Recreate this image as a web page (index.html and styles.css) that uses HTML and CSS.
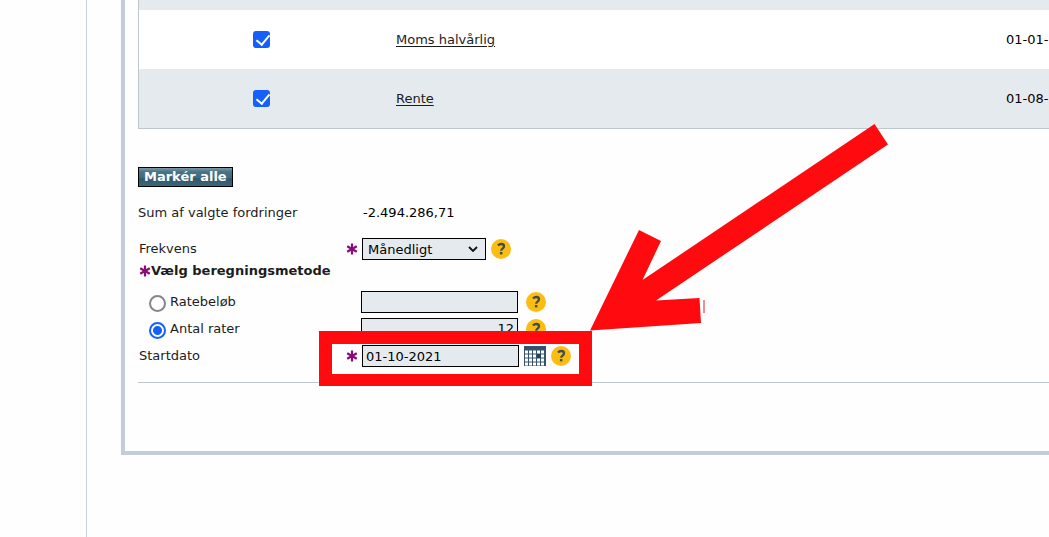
FILE: index.html
```html
<!DOCTYPE html>
<html lang="da">
<head>
<meta charset="UTF-8" />
<meta name="viewport" content="width=device-width, initial-scale=1" />
<title>Betalingsordning</title>
<link rel="stylesheet" href="styles.css">
</head>
<body>

<svg class="symbols" aria-hidden="true">
  <symbol id="help" viewBox="0 0 20 20">
    <circle cx="10" cy="10" r="10" fill="#fbbc14" />
    <path d="M7 6.6 Q8.4 5 10.2 5 Q13 5 13 7.2 Q13 8.500 11.500 9.600 Q10.200 10.500 10.200 11.800" fill="none" stroke="#3f4e48" stroke-width="2.300" />
    <rect x="8.900" y="13" width="2.500" height="2.400" fill="#3f4e48" />
  </symbol>
  <symbol id="star" viewBox="0 0 12 12">
    <path d="M6 .5V11.500M1.200 3.200L10.800 8.800M10.800 3.200L1.200 8.800" fill="none" stroke="#8b0a78" stroke-width="2.200" />
  </symbol>
</svg>

<main class="page">
  <div class="box">
    <table class="claims">
      <tbody>
        <tr class="odd cut"><td></td><td></td><td></td></tr>
        <tr>
          <td class="pick"><input type="checkbox" aria-label="Moms halvårlig" checked></td>
          <td class="name"><a href="#">Moms halvårlig</a></td>
          <td class="date">01-01-</td>
        </tr>
        <tr class="odd">
          <td class="pick"><input type="checkbox" aria-label="Rente" checked></td>
          <td class="name"><a href="#">Rente</a></td>
          <td class="date">01-08-</td>
        </tr>
      </tbody>
    </table>

    <form class="plan">
      <button type="button" class="mark">Markér alle</button>

      <div class="row sum">
        <span class="label">Sum af valgte fordringer</span>
        <span class="amount">-2.494.286,71</span>
      </div>

      <div class="row">
        <label class="label" for="freq">Frekvens</label>
        <svg class="star"><use href="#star" /></svg>
        <span class="select">
          <select id="freq"><option>Månedligt</option></select>
          <svg class="chevron" viewBox="0 0 10 6"><path d="M1 1L5 5L9 1" /></svg>
        </span>
        <svg class="help"><use href="#help" /></svg>
      </div>

      <h2 class="method"><svg class="star"><use href="#star" /></svg>Vælg beregningsmetode</h2>

      <div class="row choice">
        <span class="label">
          <input type="radio" name="method" id="amount">
          <label for="amount">Ratebeløb</label>
        </span>
        <input type="text" class="field" aria-label="Ratebeløb">
        <svg class="help"><use href="#help" /></svg>
      </div>

      <div class="row choice">
        <span class="label">
          <input type="radio" name="method" id="count" checked>
          <label for="count">Antal rater</label>
        </span>
        <input type="text" class="field number" aria-label="Antal rater" value="12">
        <svg class="help"><use href="#help" /></svg>
      </div>

      <div class="row start">
        <label class="label" for="start">Startdato</label>
        <svg class="star"><use href="#star" /></svg>
        <input type="text" class="field" id="start" value="01-10-2021">
        <svg class="calendar" viewBox="0 0 22 20">
          <rect width="22" height="20" fill="#34536a" />
          <path d="M1 6H21M1 10H21M1 14H21M1 18H21" stroke="#fff" stroke-width="3" stroke-dasharray="3 1" />
          <rect x="13" y="8" width="4" height="4" fill="#23405a" />
        </svg>
        <svg class="help"><use href="#help" /></svg>
      </div>
    </form>
  </div>
</main>

<!-- red marking around the start date -->
<div class="frame"></div>
<svg class="arrow" viewBox="0 0 300 208" aria-hidden="true">
  <path d="M284.500 0L298 20.500L66 176.500L109.500 174L111 199L0 206.500L49 106L71 117L52.500 156Z" />
  <rect x="113" y="176" width="2" height="13" />
</svg>

</body>
</html>
```

FILE: styles.css
```css
* {
  box-sizing: border-box;
}
body {
  margin: 0;
  background: #fefefe;
  color: #1c1c1c;
  font-family: Verdana, "DejaVu Sans", sans-serif;
  font-size: 13px;
  line-height: 20px;
  overflow: hidden;
}
.symbols {
  display: none;
}
.page {
  margin-left: 86px;
  padding-left: 34px;
  min-height: 100vh;
  border-left: 1px solid #c9cfd6;
}
.box {
  padding: 0 0 68px 13px;
  border-left: 4px solid #c4ccd9;
  border-bottom: 4px solid #c4ccd9;
}

/* claims */
.claims {
  width: 100%;
  table-layout: fixed;
  border-collapse: separate;
  border-spacing: 0;
  border-left: 1px solid #bfc7ce;
  border-bottom: 1px solid #bfc7ce;
}
.claims td {
  height: 59px;
  padding: 0;
  background: #fff;
  white-space: nowrap;
}
.claims .odd td {
  background: #e5eaee;
}
.claims .cut td {
  height: 10px;
}
.claims td:first-child {
  width: 244px;
  text-align: center;
}
.claims td:last-child {
  width: 43px;
  color: #000;
}
.claims .name {
  padding-left: 13px;
}
.claims a {
  color: #1c1c1c;
  text-underline-offset: 2px;
}
input[type="checkbox"] {
  appearance: none;
  display: block;
  width: 17px;
  height: 17px;
  margin: 0 auto;
  border-radius: 3px;
  background: #1560fb;
}
input[type="checkbox"]:checked::before {
  content: "";
  display: block;
  width: 6px;
  height: 11px;
  margin: 1px 0 0 6px;
  border: solid #fff;
  border-width: 0 2px 2px 0;
  transform: rotate(40deg);
}

/* payment plan */
.plan {
  padding-top: 38px;
  border-bottom: 1px solid #bfc7ce;
}
.mark {
  display: block;
  height: 20px;
  padding: 0 5px;
  border: 1px solid #000;
  background: linear-gradient(#7d9aa8, #4a7488 20%, #41697d 55%, #2f586c 60%, #3d6679);
  color: #fff;
  font: bold 13px/18px Verdana, "DejaVu Sans", sans-serif;
}
.row {
  display: flex;
  align-items: center;
  height: 22px;
}
.row.sum {
  height: 51px;
}
.label {
  flex: none;
  width: 208px;
  padding-left: 1px;
}
.sum .label {
  width: 225px;
  padding-left: 0;
}
.amount {
  color: #000;
}
.star {
  flex: none;
  width: 12px;
  height: 12px;
  margin-right: 4px;
}
.help {
  flex: none;
  width: 20px;
  height: 20px;
  margin-left: 5px;
}
.select {
  position: relative;
  display: flex;
}
.select select,
.field {
  height: 22px;
  border: 1px solid #000;
  border-radius: 0;
  background: #e5eaee;
  color: #000;
  font: 13px Verdana, "DejaVu Sans", sans-serif;
}
.select select {
  appearance: none;
  width: 124px;
  padding: 0 5px;
}
.chevron {
  position: absolute;
  top: 8px;
  right: 8px;
  width: 10px;
  height: 6px;
  fill: none;
  stroke: #111;
  stroke-width: 1.8;
}
.method {
  display: flex;
  align-items: center;
  margin: 0 0 6px;
  padding-left: 1px;
  font-size: 13px;
  line-height: 22px;
}
.method .star {
  margin-right: 0;
}
.choice {
  height: 27px;
}
.choice .label {
  display: flex;
  align-items: center;
  gap: 4px;
  width: 223px;
  padding-left: 11px;
}
.choice .help {
  margin-left: 8px;
}
input[type="radio"] {
  appearance: none;
  width: 17px;
  height: 17px;
  margin: 4px 0 0;
  border: 2px solid #85858c;
  border-radius: 50%;
  background: #fff;
}
input[type="radio"]:checked {
  border-color: #1560fb;
  background: radial-gradient(#1560fb 4px, #fff 5px);
}
.field {
  width: 157px;
  padding: 0 3px;
}
.number {
  text-align: right;
}
.start {
  height: 28px;
  margin-bottom: 12px;
}
.calendar {
  width: 22px;
  height: 20px;
  margin-left: 5px;
}

/* marking */
.frame {
  position: absolute;
  top: 331px;
  left: 319px;
  width: 273px;
  height: 55px;
  border: 13px solid #ff0a0f;
  border-bottom-width: 12px;
}
.arrow {
  position: absolute;
  top: 124px;
  left: 590px;
  width: 300px;
  height: 208px;
  fill: #ff0a0f;
}
.arrow rect {
  fill: #ee8f96;
}
```
